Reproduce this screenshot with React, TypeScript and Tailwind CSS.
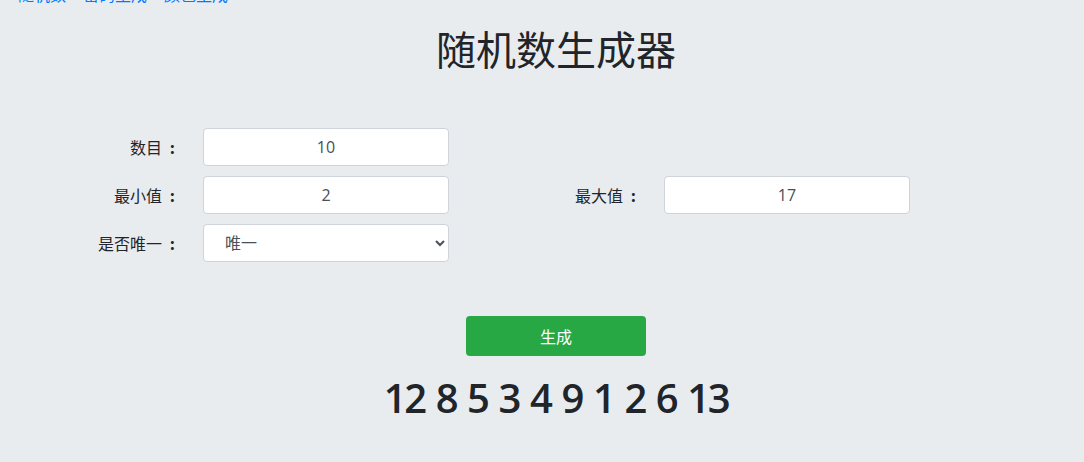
import React from 'react';

const latin = "font-['Open_Sans','Noto_Sans_CJK_SC',sans-serif]";
const cjk = "font-['Noto_Sans_CJK_SC',sans-serif]";

export default function App() {
  const numbers = [12, 8, 5, 3, 4, 9, 1, 2, 6, 13];

  return (
    <div className={`min-h-[462px] bg-[#e9ecef] text-[#212529] ${latin} overflow-hidden`}>
      {/* top nav, scrolled partly out of view */}
      <div className="-mt-[17px] h-[24px] pl-[18px] flex gap-[17px] text-[16px] leading-[24px] text-[#007bff]">
        <a>随机数</a>
        <a>密码生成</a>
        <a>颜色生成</a>
      </div>

      <div className="ml-[28px] w-[1056px]">
        <h1 className={`mt-[17px] text-center text-[40px] leading-[48px] font-normal ${cjk}`}>
          随机数生成器
        </h1>

        {/* form */}
        <div className="mt-[56px] grid grid-cols-[461px_461px] gap-y-[10px] text-[16px]">
          <Field label="数目" value="10" />
          <div />
          <Field label="最小值" value="2" />
          <Field label="最大值" value="17" />
          <div className="flex items-center">
            <Label text="是否唯一" />
            <select
              defaultValue="1"
              className="ml-[25px] w-[246px] h-[38px] pl-[17px] pr-[6px] bg-white border border-[#ced4da] rounded-[4px] text-[#495057] text-[16px] outline-none"
            >
              <option value="1">唯一</option>
              <option value="0">不唯一</option>
            </select>
          </div>
        </div>

        <div className="mt-[54px] flex justify-center">
          <button className={`w-[180px] h-[40px] bg-[#28a745] rounded-[4px] text-white text-[16px] ${cjk}`}>
            生成
          </button>
        </div>

        <div className="mt-[18px] text-center text-[40px] leading-[48px] font-semibold tracking-[-2.4px] [word-spacing:3px]">
          {numbers.join(' ')}
        </div>
      </div>
    </div>
  );
}

function Label({ text }: { text: string }) {
  return (
    <label className={`w-[150px] flex justify-end ${cjk}`}>
      {text}
      <span className="inline-block w-[16px] text-right pr-[3px] font-bold">:</span>
    </label>
  );
}

function Field({ label, value }: { label: string; value: string }) {
  return (
    <div className="flex items-center">
      <Label text={label} />
      <input
        defaultValue={value}
        className="ml-[25px] w-[246px] h-[38px] bg-white border border-[#ced4da] rounded-[4px] text-center text-[#495057] text-[16px] outline-none"
      />
    </div>
  );
}
